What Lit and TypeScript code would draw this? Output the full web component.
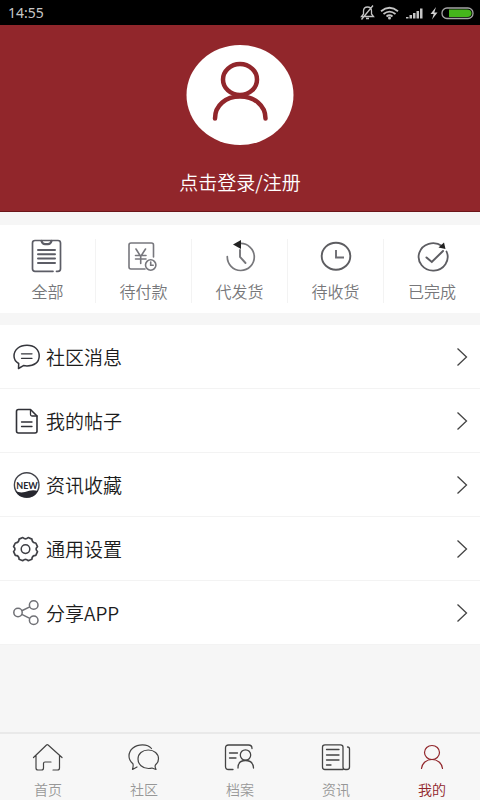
import { LitElement, html, css, svg } from "lit";
import { customElement, property, state } from "lit/decorators.js";
import { classMap } from "lit/directives/class-map.js";

const orderIcons = {
  all: svg`<g fill="none" stroke="#5c5d66" stroke-width="1.700" stroke-linecap="round">
    <path d="M22 32.300H4q-2.500 0-2.500-2.500V4q0-2.500 2.500-2.500h23q2.500 0 2.500 2.500v25.800q0 2.500-2.500 2.500h-1.500"/>
    <path d="M10.500 2q1 3.200 3.500 3.200h3q2.500 0 3.500-3.200" stroke-width="2.200"/>
    <path d="M7 11h17M7 15.300h17M7 19.600h17M7 24h17" stroke-width="2"/></g>`,
  pay: svg`<g fill="none" stroke="#77777d" stroke-width="1.600" stroke-linecap="round">
    <path d="M18 30H4q-2 0-2-2V6q0-2 2-2h20.500q2 0 2 2v12"/>
    <path d="M9 10l4.700 7.500L18.500 10M8.500 16.500h10.500M8.500 20h10.500M13.700 17v7.500"/>
    <circle cx="23.700" cy="26" r="5.200"/><path d="M23.700 23v3.300h2.500"/></g>`,
  ship: svg`<g fill="none" stroke="#77777b" stroke-width="1.700" stroke-linecap="round">
    <path d="M4.300 17.500A13.500 13.500 0 1 0 17 4.500"/><path d="M17 11v7l5.500 6" stroke-width="1.900"/></g>
    <path d="M10 5.500L18 1v9z" fill="#222"/>`,
  receive: svg`<g fill="none" stroke="#5d5d61" stroke-width="1.900">
    <ellipse cx="17" cy="17.200" rx="14.300" ry="13.500"/><path d="M17 11v7.500h8" stroke="#6d6d72"/></g>`,
  done: svg`<g fill="none" stroke="#5d5d62" stroke-width="1.800" stroke-linecap="round">
    <path d="M26 7A14.500 13.700 0 1 0 30.500 12.500"/><path d="M10.500 18.500l5.300 4.500L27 12" stroke-width="2"/></g>
    <path d="M28 3.500l1.500 6.500-7-1.500z" fill="#222"/>`,
};

const listIcons = {
  message: svg`<g fill="none" stroke="#35363c" stroke-width="1.500" stroke-linejoin="round" stroke-linecap="round">
    <path d="M6.700 20.500C3.600 18.700 2 16.200 2 13 2 6.500 7.500 2.300 15 2.300S27.200 6.500 27.200 13 22 23 15 23q-1.800 0-3.600-.4L6.500 25.500z"/>
    <path d="M9.500 10.800h10.500M9.500 15.300h10.500" stroke-width="1.300"/></g>`,
  post: svg`<g fill="none" stroke="#303137" stroke-width="1.600" stroke-linejoin="round" stroke-linecap="round">
    <path d="M18.500 2.500H6.500Q4.500 2.500 4.500 4.500v19.500q0 2 2 2h16.500q2 0 2-2V9z"/><path d="M18.500 3V7.500q0 1.500 1.500 1.500h5M9.500 15h10.500M9.500 19.500h10.500" stroke-width="1.300"/></g>`,
  news: svg`<circle cx="14.700" cy="14" r="12.300" fill="none" stroke="#42434a" stroke-width="1.400"/>
    <path d="M3.500 20q4.500 2.200 9.500.9 7-2.700 12.900-1Q22.700 26.500 14.700 26.500q-8 0-11.200-6.500z" fill="#26262e"/>
    <text x="15" y="17.500" text-anchor="middle" class="new">NEW</text>`,
  settings: svg`<g fill="none" stroke="#3f4046" stroke-width="1.700" stroke-linejoin="round">
    <path d="M10.800 2.500q2.700 2.600 5.400 0l3.700 1.600q.1 3.900 3.900 3.900l1.700 3.600q-2.800 2.500 0 5l-1.700 3.700q-3.900.1-3.900 3.900l-3.700 1.500q-2.700-2.700-5.400 0l-3.700-1.500q0-3.800-3.800-3.900l-1.700-3.700q2.700-2.500 0-5L3.300 8q3.700-.1 3.800-3.900z"/>
    <circle cx="13.500" cy="14.100" r="4.300" stroke-width="1.500"/></g>`,
  share: svg`<g fill="none" stroke="#707176" stroke-width="1.500">
    <circle cx="6" cy="13.500" r="4.200"/><circle cx="21.700" cy="6" r="4.300"/><circle cx="21.700" cy="21.300" r="4.300"/>
    <path d="M9.800 11.700l8-3.800M9.800 15.300l8 4.100"/></g>`,
};

const tabIcons = {
  home: svg`<g fill="none" stroke="currentColor" stroke-width="1.200" stroke-linecap="round" stroke-linejoin="round">
    <path d="M2.500 14.500L15.500 2q.8-.7 1.600 0L31 14.500M5 12.500V25q0 2 2 2h3.500q2 0 2-2v-4.500q0-1.500 1.500-1.500H20M28.500 12.500V25q0 2-2 2h-4.500"/></g>`,
  chat: svg`<g fill="none" stroke="currentColor" stroke-width="1.200" stroke-linecap="round" stroke-linejoin="round">
    <path d="M24.500 5.500C22.500 3 19 1.800 15.500 1.800 8 1.800 2 6.500 2 13q0 4.500 3.700 7.500 1 1-.2 6l4.500-2.500"/>
    <path d="M29 26.500q-1.700-3.500-.2-5 2.700-2.500 2.700-5.800c0-5-4.300-8.700-10.200-8.700S11 10.700 11 16s4.500 9.500 10.500 9.500q2 0 3.500-.5z"/></g>`,
  archive: svg`<g fill="none" stroke="currentColor" stroke-width="1.300" stroke-linecap="round" stroke-linejoin="round">
    <path d="M10 26.500H5.500q-3 0-3-3V5q0-3 3-3h20q3.500 0 3.500 3.500M6.500 10h8M6.500 15h6.500"/>
    <circle cx="22.500" cy="12" r="5.200"/><path d="M15 25q0-7.500 7.500-7.500T30.500 25"/></g>`,
  news: svg`<g fill="none" stroke="currentColor" stroke-width="1.300" stroke-linecap="round" stroke-linejoin="round">
    <path d="M24 26.500H6q-2.500 0-2.500-2.500V4Q3.500 1.800 6 1.800h15.500Q24 1.800 24 4v20q0 2.500 2.500 2.500H28q2.500 0 2.500-2.500V6q0-2-2-2"/>
    <path d="M7.500 6.500H20M7.500 12H20M7.500 17H20M7.500 22h4.500"/></g>`,
  me: svg`<g fill="none" stroke="currentColor" stroke-width="1.200" stroke-linecap="round">
    <ellipse cx="17" cy="9.500" rx="7.500" ry="7"/><path d="M6.500 25.500c.5-5.500 5-9 10.500-9s10 3.500 10.500 9"/></g>`,
};

type Entry<T> = { icon: keyof T; label: string };

const ORDERS: Entry<typeof orderIcons>[] = [
  { icon: "all", label: "全部" },
  { icon: "pay", label: "待付款" },
  { icon: "ship", label: "代发货" },
  { icon: "receive", label: "待收货" },
  { icon: "done", label: "已完成" },
];

const ROWS: Entry<typeof listIcons>[] = [
  { icon: "message", label: "社区消息" },
  { icon: "post", label: "我的帖子" },
  { icon: "news", label: "资讯收藏" },
  { icon: "settings", label: "通用设置" },
  { icon: "share", label: "分享APP" },
];

const TABS: Entry<typeof tabIcons>[] = [
  { icon: "home", label: "首页" },
  { icon: "chat", label: "社区" },
  { icon: "archive", label: "档案" },
  { icon: "news", label: "资讯" },
  { icon: "me", label: "我的" },
];

@customElement("status-bar")
class StatusBar extends LitElement {
  @property() time = "";

  static styles = css`
    :host {
      display: flex;
      align-items: center;
      justify-content: space-between;
      height: 25px;
      padding: 0 5px 0 8px;
      background: #000;
      color: #c8c8c8;
      font: 14px/25px "Noto Sans", sans-serif;
    }
    .icons {
      display: block;
      width: 116px;
      height: 18px;
    }
  `;

  render() {
    return html`
      <span>${this.time}</span>
      <svg class="icons" viewBox="0 0 116 18" aria-hidden="true">
        <g fill="none" stroke="#c4c4c4" stroke-width="1.300">
          <path d="M2.500 12.500h12l-2-2.500V7q0-4-4-4t-4 4v3zM7 14.500h3M14 1.500L2.500 15.500" />
          <path d="M22 7.200q8.500-7 17 0M24.500 10q6-4.800 12 0" stroke-width="1.800" />
          <path d="M27.500 12.500q3-2.500 6 0" stroke-width="1.800" />
        </g>
        <circle cx="30.500" cy="14" r="1.500" fill="#c4c4c4" />
        <path d="M47 14.500v-1.500h2.500v1.500zM50.500 14.500v-3.500h2.500v3.500zM54 14.500V9h2.500v5.500zM57.500 14.500V7h2.500v7.500zM61 14.500V4.500h2.500v10z" fill="#c4c4c4" />
        <path d="M77 3l-5.500 7h3.200l-1.700 5.500 5.500-7h-3.200z" fill="#d0d0d0" />
        <rect x="83" y="4" width="31" height="10.500" rx="5" fill="#000" stroke="#a5a5a5" stroke-width="1.300" />
        <path d="M90 5.500h18q4.500 0 4.500 3.800T108 13H90z" fill="#45b51b" />
      </svg>
    `;
  }
}

@customElement("app-root")
class AppRoot extends LitElement {
  @state() private active = "me";

  static styles = css`
    :host {
      display: flex;
      flex-direction: column;
      min-height: 100vh;
      background: #f6f6f6;
      color: #1c1c1c;
      font-family: "Noto Sans CJK SC", sans-serif;
      font-weight: 350;
    }
    button {
      margin: 0;
      padding: 0;
      border: 0;
      background: none;
      color: inherit;
      font: inherit;
      cursor: pointer;
    }
    svg {
      display: block;
      flex: none;
    }
    .profile {
      display: flex;
      flex-direction: column;
      background: #91262b;
      border-bottom: 1px solid #6b1519;
    }
    .login {
      display: flex;
      flex-direction: column;
      align-items: center;
      gap: 24px;
      padding: 20px 0 16px;
      color: #fff;
      font-size: 19px;
      line-height: 26px;
    }
    .avatar {
      width: 108px;
      height: 100px;
    }
    .orders {
      display: grid;
      grid-template-columns: repeat(5, 1fr);
      margin: 13px 0 12px;
      padding: 14px 0 10px;
      background: #fff;
    }
    .order {
      display: flex;
      flex-direction: column;
      align-items: center;
      gap: 6px;
      height: 64px;
      border-right: 1px solid #f3f3f3;
      color: #77777a;
      font-size: 16px;
      line-height: 24px;
    }
    .order:last-child {
      border-right: 0;
    }
    .order-icon {
      width: 33px;
      height: 34px;
    }
    .rows {
      display: flex;
      flex-direction: column;
    }
    .row {
      display: flex;
      align-items: center;
      gap: 6px;
      height: 64px;
      padding: 0 12px;
      border-bottom: 1px solid #f3f3f3;
      background: #fff;
      font-size: 19px;
      text-align: left;
    }
    .row-icon {
      width: 28px;
      height: 28px;
    }
    .new {
      fill: #26262e;
      font: bold 9px Lato, sans-serif;
    }
    .row-label {
      flex: 1;
    }
    .chevron {
      width: 12px;
      height: 20px;
    }
    .tabs {
      display: grid;
      grid-template-columns: repeat(5, 1fr);
      margin-top: auto;
      border-top: 2px solid #e9e9e9;
      background: #f7f7f7;
    }
    .tab {
      display: flex;
      flex-direction: column;
      align-items: center;
      gap: 7px;
      padding: 9px 0 0;
      color: #444;
      font-size: 14px;
      line-height: 22px;
    }
    .tab-icon {
      width: 34px;
      height: 28px;
    }
    .tab-label {
      color: #979797;
    }
    .tab.active,
    .active .tab-label {
      color: #91262b;
    }
  `;

  render() {
    return html`
      <status-bar time="14:55"></status-bar>
      <header class="profile">
        <button class="login">
          <svg class="avatar" viewBox="0 0 108 100" aria-hidden="true">
            <ellipse cx="54" cy="50" rx="53.500" ry="50" fill="#fff" />
            <g fill="none" stroke="#91262b" stroke-width="4.500" stroke-linecap="round">
              <ellipse cx="54" cy="34.500" rx="17" ry="15.500" />
              <path d="M29 73.500C29 60 40 51.500 54 51.500S79.500 60 79.500 73.500" />
            </g>
          </svg>
          <span>点击登录/注册</span>
        </button>
      </header>
      <section class="orders">
        ${ORDERS.map(
          (o) => html`<button class="order">
            <svg class="order-icon" viewBox="0 0 33 34" aria-hidden="true">${orderIcons[o.icon]}</svg>
            <span>${o.label}</span>
          </button>`
        )}
      </section>
      <section class="rows">
        ${ROWS.map(
          (r) => html`<button class="row">
            <svg class="row-icon" viewBox="0 0 28 28" aria-hidden="true">${listIcons[r.icon]}</svg>
            <span class="row-label">${r.label}</span>
            <svg class="chevron" viewBox="0 0 12 20" aria-hidden="true">
              <path d="M1.500 1.500L10.500 10l-9 8.500" fill="none" stroke="#444" stroke-width="1.300" />
            </svg>
          </button>`
        )}
      </section>
      <nav class="tabs">
        ${TABS.map(
          (t) => html`<button
            class=${classMap({ tab: true, active: t.icon === this.active })}
            @click=${() => (this.active = t.icon)}
          >
            <svg class="tab-icon" viewBox="0 0 34 28" aria-hidden="true">${tabIcons[t.icon]}</svg>
            <span class="tab-label">${t.label}</span>
          </button>`
        )}
      </nav>
    `;
  }
}
